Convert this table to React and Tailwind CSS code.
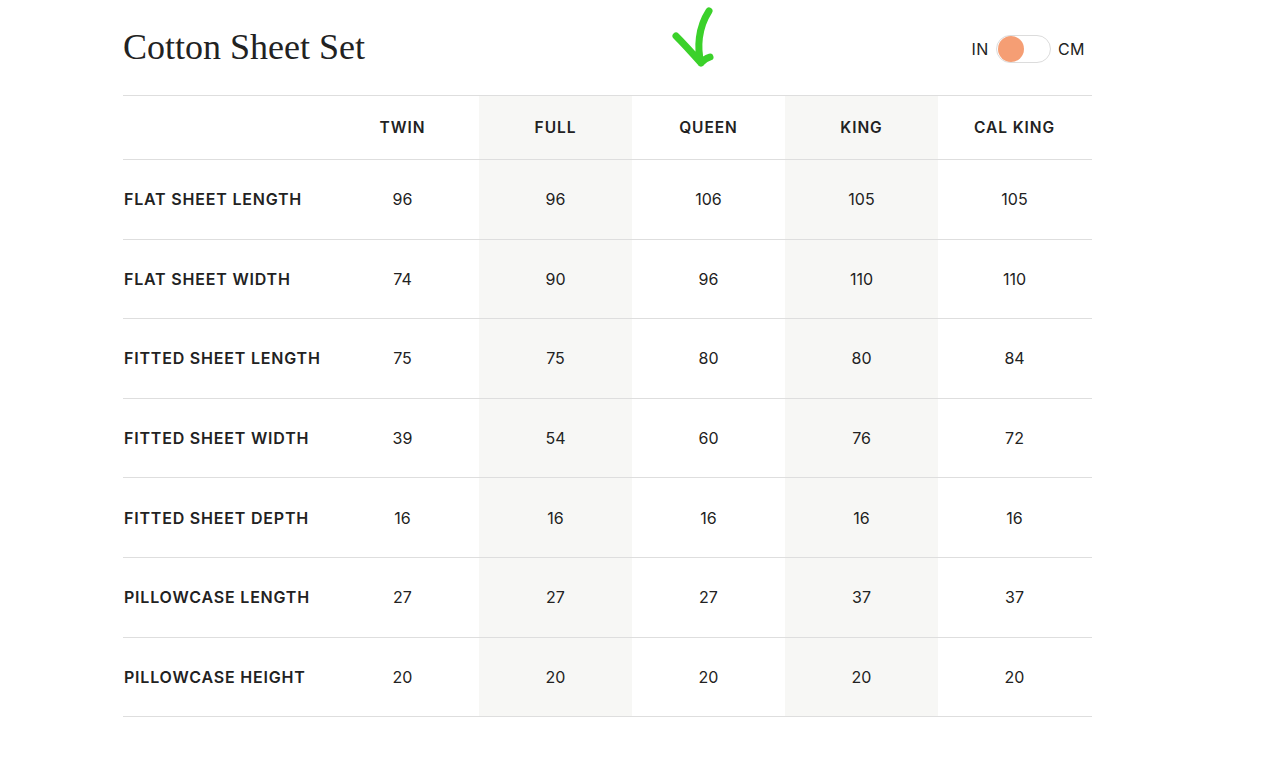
const sizes = ['TWIN', 'FULL', 'QUEEN', 'KING', 'CAL KING']

const rows = [
  ['FLAT SHEET LENGTH', [96, 96, 106, 105, 105]],
  ['FLAT SHEET WIDTH', [74, 90, 96, 110, 110]],
  ['FITTED SHEET LENGTH', [75, 75, 80, 80, 84]],
  ['FITTED SHEET WIDTH', [39, 54, 60, 76, 72]],
  ['FITTED SHEET DEPTH', [16, 16, 16, 16, 16]],
  ['PILLOWCASE LENGTH', [27, 27, 27, 37, 37]],
  ['PILLOWCASE HEIGHT', [20, 20, 20, 20, 20]],
]

const shaded = (i) => (i === 1 || i === 3 ? 'bg-[#f7f7f5]' : '')

function Toggle() {
  return (
    <div className="flex items-center gap-[7px] text-[16px] text-[#222] tracking-[0.03em]" style={{ fontFamily: 'Inter, sans-serif' }}>
      <span>IN</span>
      <div className="w-[55px] h-[28px] rounded-full border border-[#dcdcdc] bg-white flex items-center px-[1px]">
        <div className="w-[26px] h-[26px] rounded-full bg-[#f59e74]" />
      </div>
      <span>CM</span>
    </div>
  )
}

function Check() {
  return (
    <svg className="absolute left-[664px] top-0" width="60" height="76" viewBox="0 0 60 76">
      <path
        d="M12 36 C 20 44, 29 54, 37 63 C 40 59, 43 58, 46 57 M37 63 C 33 48, 34 28, 45 11"
        fill="none"
        stroke="#3bd12a"
        strokeWidth="7"
        strokeLinecap="round"
        strokeLinejoin="round"
      />
    </svg>
  )
}

export default function App() {
  return (
    <div className="relative min-h-[757px] bg-white text-[#222]" style={{ fontFamily: 'Inter, sans-serif' }}>
      <Check />
      <div className="ml-[123px] w-[969px]">
        <div className="h-[95px] flex items-center justify-between pt-[2px]">
          <h1 className="text-[36px] leading-none text-[#222] -mt-[3px]" style={{ fontFamily: '"Liberation Serif", serif' }}>
            Cotton Sheet Set
          </h1>
          <div className="mr-[7px] mt-[1px]">
            <Toggle />
          </div>
        </div>
        <div className="border-t border-[#dedede]">
          <div className="grid grid-cols-[203px_repeat(5,153px)] h-[64px] border-b border-[#dedede]">
            <div />
            {sizes.map((s, i) => (
              <div key={s} className={`flex items-center justify-center text-[15.5px] font-semibold tracking-[0.06em] ${shaded(i)}`}>
                {s}
              </div>
            ))}
          </div>
          {rows.map(([label, vals]) => (
            <div key={label} className="grid grid-cols-[203px_repeat(5,153px)] h-[79.6px] border-b border-[#dedede]">
              <div className="flex items-center pl-[1px] text-[16px] font-semibold tracking-[0.05em] whitespace-nowrap">{label}</div>
              {vals.map((v, i) => (
                <div key={i} className={`flex items-center justify-center text-[16px] ${shaded(i)}`}>
                  {v}
                </div>
              ))}
            </div>
          ))}
        </div>
      </div>
    </div>
  )
}
